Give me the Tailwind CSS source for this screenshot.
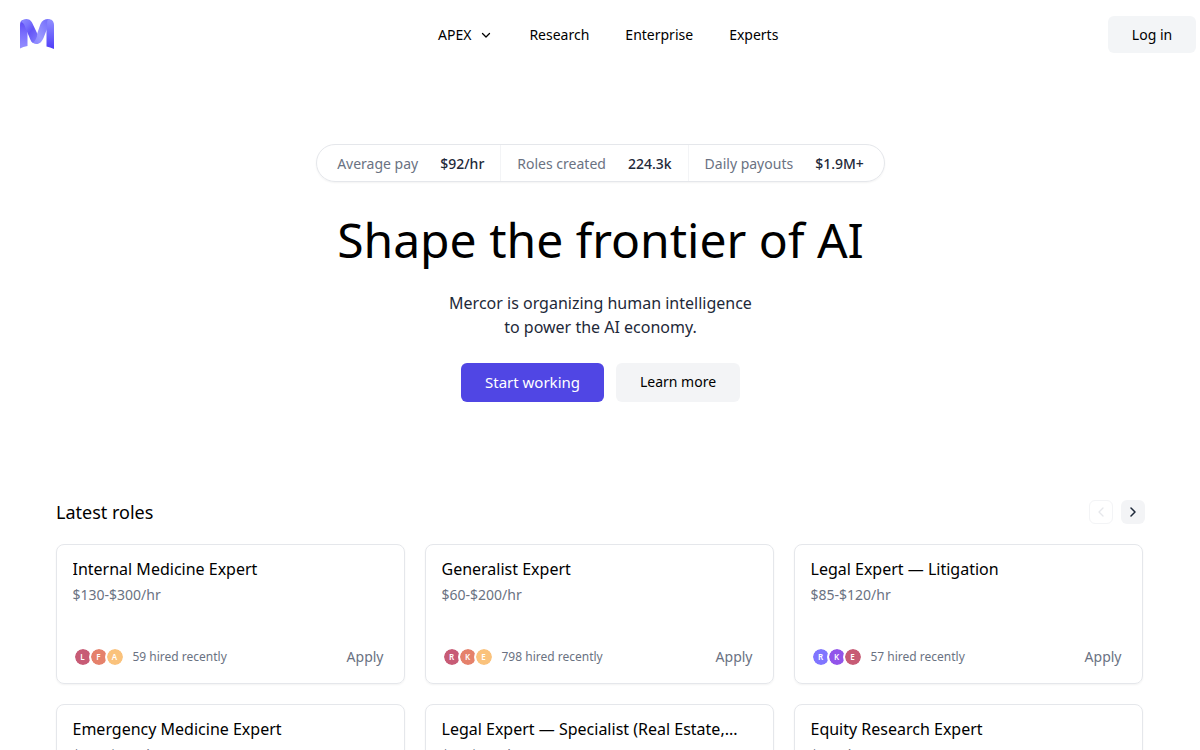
<!DOCTYPE html>
<html lang="en">
<head>
<meta charset="utf-8">
<title>Mercor</title>
<script src="https://cdn.jsdelivr.net/npm/@tailwindcss/browser@4"></script>
</head>
<body class="h-[750px] overflow-hidden bg-white font-['Noto_Sans',sans-serif] text-black">
<header class="grid h-[69px] grid-cols-[418px_1fr_88px] items-center pl-5 pr-1 text-sm">
  <svg class="mt-[-1px] h-[30px] w-[34px]" viewBox="0 0 34 30" fill="none">
    <defs>
      <linearGradient id="a" x1="0" y1="0" x2="0" y2="1"><stop offset=".1" stop-color="#6250f6"/><stop offset=".5" stop-color="#7a6ffc"/><stop offset="1" stop-color="#958fff"/></linearGradient>
      <linearGradient id="b" x1="0" y1="0" x2=".8" y2="1"><stop stop-color="#8f8eff"/><stop offset=".35" stop-color="#7a73fd"/><stop offset=".6" stop-color="#6455f6"/><stop offset="1" stop-color="#7c74fc"/></linearGradient>
      <linearGradient id="c" x1="0" y1="1" x2="1" y2="0"><stop stop-color="#8580fe"/><stop offset=".4" stop-color="#9a98ff"/><stop offset="1" stop-color="#716bfb"/></linearGradient>
      <linearGradient id="d" x1="0" y1="0" x2="0" y2="1"><stop stop-color="#9290ff"/><stop offset=".5" stop-color="#7068fc"/><stop offset="1" stop-color="#503df8"/></linearGradient>
    </defs>
    <path d="M0 29.500V6C0 3 1 1.500 3 1L7.500 10V27Q3 27.500 0 29.500Z" fill="url(#a)"/>
    <path d="M34 30V6C34 2 31.500 0 28 0L25 4 26.500 12V27.500Q30 28 34 30Z" fill="url(#d)"/>
    <path d="M11 21L17 15L20.500 5C22 1.500 24.500 0 28.500 0C26 2.500 28 6 27 10L23.500 19C21.500 23.500 19 25 16.500 25C14 25 12 23.500 11 21Z" fill="url(#c)"/>
    <path d="M1 3C2.500 -.5 9.500 -1.500 12 3.500L17 14C17.500 17 16.500 20 13 24C11.800 23.300 11 22.300 10.500 21L5.500 9C4.500 6 3.500 3.500 1 3Z" fill="url(#b)"/>
  </svg>
  <nav class="flex items-center gap-9">
    <span class="mr-px flex items-center gap-[9px]">APEX
      <svg class="h-3 w-3" viewBox="0 0 12 12" fill="none" stroke="currentColor" stroke-width="1.300" stroke-linecap="round" stroke-linejoin="round"><path d="M2.500 4.500 6 8 9.500 4.500"/></svg>
    </span>
    <span>Research</span><span>Enterprise</span><span>Experts</span>
  </nav>
  <button class="h-[37px] rounded-md bg-[#f3f5f7]">Log in</button>
</header>
<main>
  <section class="flex flex-col items-center pl-px pt-[75px]">
    <div class="flex h-[38px] rounded-full border border-gray-200 text-sm text-gray-500 shadow-xs">
      <div class="flex items-center gap-[22px] border-r border-gray-100 pl-5 pr-4 pt-0.5">Average pay<b class="font-medium text-gray-800">$92/hr</b></div>
      <div class="flex items-center gap-[22px] border-r border-gray-100 px-4 pt-0.5">Roles created<b class="font-medium text-gray-800">224.3k</b></div>
      <div class="flex items-center gap-[22px] pl-4 pr-5 pt-0.5">Daily payouts<b class="font-medium text-gray-800">$1.9M+</b></div>
    </div>
    <h1 class="mt-[34px] text-5xl leading-[48px]">Shape the frontier of AI</h1>
    <p class="mt-[27px] text-center text-base text-gray-800">Mercor is organizing human intelligence<br>to power the AI economy.</p>
    <div class="mt-6 flex h-[39px] gap-3">
      <button class="w-[143px] rounded-md bg-[#5046e4] text-[15px] text-white antialiased">Start working</button>
      <button class="w-[124px] rounded-md bg-gray-100 pb-0.5 text-sm">Learn more</button>
    </div>
  </section>
  <section class="mt-[98px] pl-14">
    <div class="flex w-[1089px] items-center justify-between">
      <h2 class="text-lg leading-6">Latest roles</h2>
      <div class="flex gap-2">
        <button class="flex size-6 items-center justify-center rounded-md border border-gray-100 text-gray-200"><svg class="size-4" viewBox="0 0 16 16" fill="none" stroke="currentColor" stroke-width="1.300" stroke-linecap="round" stroke-linejoin="round"><path d="M10 4 6 8l4 4"/></svg></button>
        <button class="flex size-6 items-center justify-center rounded-md bg-gray-100 text-gray-800"><svg class="size-4" viewBox="0 0 16 16" fill="none" stroke="currentColor" stroke-width="1.500" stroke-linecap="round" stroke-linejoin="round"><path d="M6 4l4 4-4 4"/></svg></button>
      </div>
    </div>
    <div id="roles" class="mt-5 grid w-[1087px] grid-cols-3 gap-5"></div>
  </section>
</main>
<script>
const roles = [
  ['Internal Medicine Expert', '$130-$300/hr', '59', [['L','#c75b75'],['F','#e5816b'],['A','#fac27c']]],
  ['Generalist Expert', '$60-$200/hr', '798', [['R','#c75b75'],['K','#e5816b'],['E','#fac27c']]],
  ['Legal Expert — Litigation', '$85-$120/hr', '57', [['R','#8075ff'],['K','#9254ea'],['E','#c75b75']]],
  ['Emergency Medicine Expert', '$130-$300/hr'],
  ['Legal Expert — Specialist (Real Estate,...', '$90-$120/hr'],
  ['Equity Research Expert', '$150/hr'],
];
document.getElementById('roles').innerHTML = roles.map(([title, pay, hired, people]) => `
  <article class="flex h-[140px] flex-col rounded-lg border border-gray-200 px-[15.500px] pt-3 shadow-xs">
    <h3 class="truncate text-base">${title}</h3>
    <p class="mt-[3px] text-sm leading-[22px] text-gray-500">${pay}</p>
    ${people ? `<div class="mt-10 flex h-[22px] items-center text-gray-500">
      <div class="flex">${people.map(([c, bg]) => `<span class="-mr-1 flex size-5 items-center justify-center rounded-full border-2 border-white bg-clip-padding text-[8px] font-semibold text-white antialiased" style="background-color:${bg}">${c}</span>`).join('')}</div>
      <span class="ml-3 text-xs">${hired} hired recently</span>
      <span class="ml-auto pr-[5px] text-sm">Apply</span>
    </div>` : ''}
  </article>`).join('');
</script>
</body>
</html>
